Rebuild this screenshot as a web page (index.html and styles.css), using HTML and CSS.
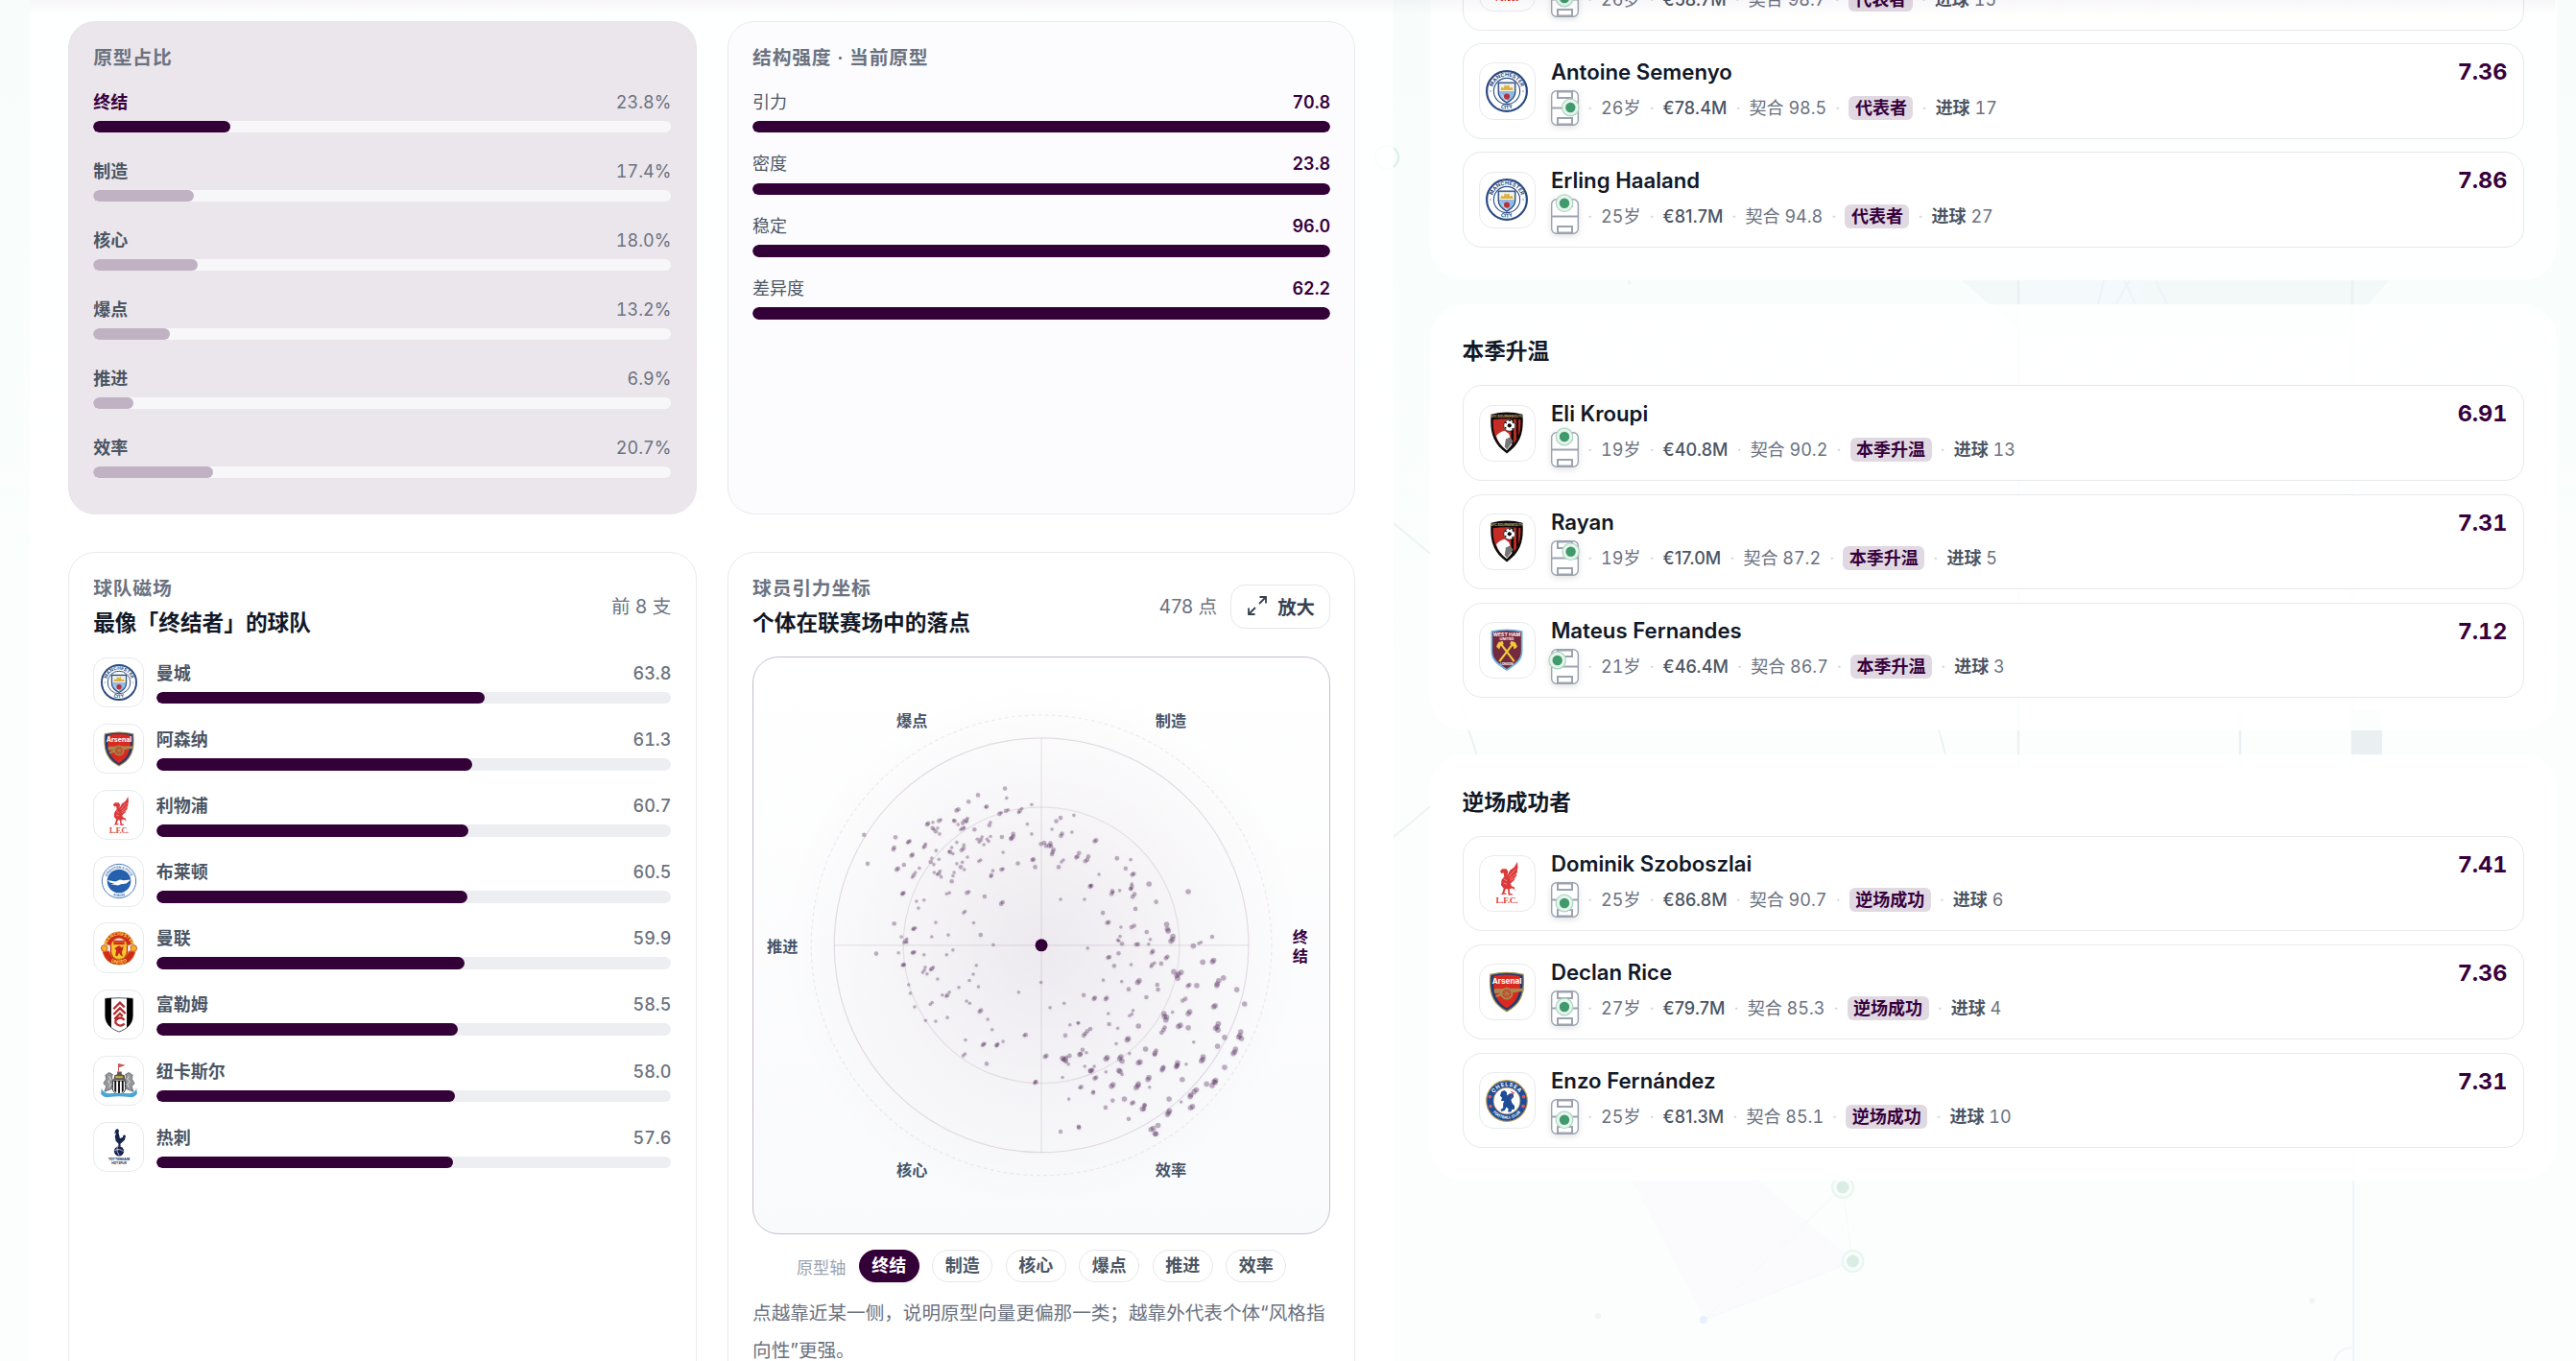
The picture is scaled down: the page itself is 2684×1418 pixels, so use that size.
FILE: index.html
```html
<!DOCTYPE html>
<html lang="zh-CN">
<head>
    <meta charset="UTF-8">
    <meta name="viewport" content="width=device-width, initial-scale=1.0">
    <title>联赛引力场</title>
    <link rel="stylesheet" href="styles.css">
</head>
<body>
    <!-- 队徽 -->
    <svg class="sprite" aria-hidden="true">
        <defs>
            <path id="arcTop" d="M6 20a14 14 0 0 1 28 0"/>
            <path id="arcBottom" d="M3 20a17 17 0 0 0 34 0"/>
            <path id="arcBottomIn" d="M4 21a16 16 0 0 0 32 0"/>
        </defs>
        <symbol id="mci" viewBox="0 0 40 40">
            <circle cx="20" cy="20" r="19" fill="#fff" stroke="#2a4a80" stroke-width="2"/>
            <circle cx="20" cy="20" r="12.4" fill="#fff" stroke="#2a4a80" stroke-width="1"/>
            <text class="ring-text" fill="#2a4a80"><textPath href="#arcTop" startOffset="50%" text-anchor="middle">MANCHESTER</textPath></text>
            <text class="ring-text" fill="#2a4a80"><textPath href="#arcBottom" startOffset="50%" text-anchor="middle">CITY</textPath></text>
            <path d="M12 12h16v9c0 5-4 8-8 10-4-2-8-5-8-10z" fill="#8fbce6" stroke="#2a4a80" stroke-width="1.2"/>
            <path d="M13 13h14v7H13z" fill="#f6f3e4"/>
            <path d="M14 19l1-3 2 1 1-3 2 1 2-1 1 3 2-1 1 3z" fill="#e0b040"/>
            <path d="M13 21l6 8 2 1-8-9zM27 21l-6 8z" fill="#fff"/>
            <circle cx="20" cy="25" r="2.8" fill="#b9303c"/>
            <circle cx="4.5" cy="20" r=".9" fill="#8fbce6"/><circle cx="35.500" cy="20" r=".9" fill="#8fbce6"/>
        </symbol>
        <symbol id="ars" viewBox="0 0 40 40">
            <path d="M4 3.500Q20-.5 36 3.500c1.500 17-1 28-16 36C5 31.500 2.500 20.500 4 3.500z" fill="#a08848"/>
            <path d="M5 4.500Q20 .8 35 4.500c1 16-1 26-15 33.500C6 30.500 4 20.500 5 4.500z" fill="#1b3b78"/>
            <path d="M7.500 5.500Q20 2.500 32.500 5.500c.8 14-1 23.500-12.500 30.500C8.500 29 6.700 19.500 7.500 5.500z" fill="#da2a20"/>
            <text x="20" y="13" text-anchor="middle" class="crest-text" font-size="7.400" fill="#fff">Arsenal</text>
            <path d="M8 17.500l28-.5v2.500l-13 2-13 4-1-1.500 5-2.500H8z" fill="#a8894c"/>
            <circle cx="20" cy="22" r="5" fill="#c33d2a" stroke="#a8894c" stroke-width="1.600"/>
            <path d="M15 22h10M20 17v10M16.500 18.500l7 7M23.500 18.500l-7 7" stroke="#a8894c" stroke-width=".9"/>
        </symbol>
        <symbol id="lfc" viewBox="0 0 40 40">
            <path d="M15.500 30l1.500-5-2.500-3 .5-5 2.500-3-.5-3.500-2 .5-1.500-2 2-2.300 4-.2 1.800 2.500-1 4 2.700-5L27 5l3-5 .5 6-1 2 .8.500-1.500 3.500.8.300-2 3.200-.3 1.500-3.800 3.500 1 2.500 2.500.8 1 3.700-1.500-2-2.200-.5-1.800 1 .5 4h2l.5 1.200-4 .3-.5-5.500-2-.5-1.500 4h1.800l.3 1.200-6 .3z" fill="#dc3a3a"/>
            <path d="M22 14l6-7M23 16l6-5M23.500 17.500l4.500-2.500M17 16l3 2M17 20l3 1" stroke="#f3b0ae" stroke-width=".6" fill="none"/>
            <text x="20" y="39.500" text-anchor="middle" font-size="8.400" textLength="21" fill="#d84040" class="serif-text">L.F.C.</text>
        </symbol>
        <symbol id="bha" viewBox="0 0 40 40">
            <circle cx="20" cy="20" r="18.600" fill="#fff" stroke="#3f74b8" stroke-width="1"/>
            <circle cx="20" cy="20" r="13" fill="#2460ad"/>
            <text class="ring-text thin" fill="#3f74b8"><textPath href="#arcTop" startOffset="50%" text-anchor="middle">BRIGHTON &amp; HOVE</textPath></text>
            <text class="ring-text thin" fill="#3f74b8"><textPath href="#arcBottomIn" startOffset="50%" text-anchor="middle">ALBION</textPath></text>
            <path d="M7 19l9 1.500 5-2 4 .8 8-.8-5 4-6 1-3 1.300-8-1.300 4-.8-5-1.200z" fill="#fff"/>
        </symbol>
        <symbol id="mun" viewBox="0 0 40 40">
            <path d="M11 12h18v12c0 5-4 8-9 10-5-2-9-5-9-10z" fill="#f6c62e" stroke="#c4281c" stroke-width="1.400"/>
            <path d="M4 15Q8 2 20 2t16 13l-7 2q-2-8-9-8t-9 8z" fill="#d3281c" stroke="#b98a22" stroke-width=".8"/>
            <path d="M2 24l7-1q3 9 11 9t11-9l7 1Q34 38 20 38T2 24z" fill="#d3281c" stroke="#b98a22" stroke-width=".8"/>
            <circle cx="4" cy="20" r="3.600" fill="#f0b02a" stroke="#c4281c" stroke-width=".7"/>
            <circle cx="36" cy="20" r="3.600" fill="#f0b02a" stroke="#c4281c" stroke-width=".7"/>
            <text class="ring-text" fill="#f8d84a"><textPath href="#arcTop" startOffset="50%" text-anchor="middle">MANCHESTER</textPath></text>
            <text class="ring-text" fill="#f8d84a"><textPath href="#arcBottomIn" startOffset="50%" text-anchor="middle">UNITED</textPath></text>
            <path d="M14 13h12v3H14z" fill="#d3281c"/>
            <path d="M17 19l3-2 3 2 2-1-1 4-1 2 1 5-2-1-2-3-2 4-2-1 1-6-2-2z" fill="#c4281c"/>
        </symbol>
        <symbol id="ful" viewBox="0 0 40 40">
            <path d="M5 2.500Q20 1 35 2.500v19C35 31 28 36 20 39 12 36 5 31 5 21.500z" fill="#fff" stroke="#222" stroke-width=".8"/>
            <path d="M5 2.500l6.500-.6v32.500Q5 29 5 21.500zM35 2.500l-6.500-.6v32.500Q35 29 35 21.500z" fill="#000"/>
            <path d="M14 14l7-7 5 5M14 20l7-7 6 6M15 25l6-6 3 3M26 26q-4-4-8-1t0 6q4 3 8-1" fill="none" stroke="#b42a2e" stroke-width="2.400"/>
        </symbol>
        <symbol id="new" viewBox="0 0 40 40">
            <path d="M12 29l-8 3 2-6-3-3 3-5-1-4 4-3 4 2-1 4 3 3zM28 29l8 3-2-6 3-3-3-5 1-4-4-3-4 2 1 4-3 3z" fill="#94979b" stroke="#444" stroke-width=".6"/>
            <path d="M9 15l2 3-3 3 3 3-2 3M31 15l-2 3 3 3-3 3 2 3" stroke="#eee" stroke-width=".9" fill="none"/>
            <path d="M13 20h14v8c0 4-3 6-7 8-4-2-7-4-7-8z" fill="#fff" stroke="#222"/>
            <path d="M15 20h2v13l-2-2zM19 20h2v15h-2zM23 20h2v11l-2 2z" fill="#111"/>
            <path d="M14 19l1-5 3-1v-3h5v3l3 1 1 5z" fill="#5c5a50"/>
            <path d="M16 15h8v2h-8z" fill="#d8b040"/>
            <path d="M19 10V1l8 2-7 2.500V10z" fill="#c8524c"/>
            <path d="M1 28q1 6 8 6 11-1 22 0 7 0 8-6l1 6q-3 5-9 4-11-2-22 0-6 1-9-4z" fill="#4aa5d4"/>
        </symbol>
        <symbol id="tot" viewBox="0 0 40 40">
            <path d="M16 1.500l2-1.500 2 1.500-.5 3 1.500 6 3-1 1-3 2.500 1-1.500 5-4.500 4 .3 3h-2.600l.3-3-3-3-1-5 1.500-4-2 1z" fill="#16234f"/>
            <circle cx="20" cy="24.500" r="5.400" fill="#16234f"/>
            <path d="M15 24q5-3 10 1M18 20q-1 5 2 9" stroke="#fff" stroke-width=".7" fill="none"/>
            <text x="20" y="35" text-anchor="middle" font-size="3.600" class="crest-text" fill="#16234f">TOTTENHAM</text>
            <text x="20" y="38.800" text-anchor="middle" font-size="3.400" class="crest-text" fill="#16234f">HOTSPUR</text>
        </symbol>
        <symbol id="bou" viewBox="0 0 40 40">
            <path d="M5 2.500Q20-1.500 35 2.500c1 16-1 27-15 37C6 29.500 4 18.500 5 2.500z" fill="#0d0a0a"/>
            <path d="M7 7.500q13-2 26 0c.4 12-2 20.500-13 28.500C9 28 6.600 19.500 7 7.500z" fill="#c62c26"/>
            <path d="M24 7h2.500v24l-2.500 2.500zM29 7.300h2v16l-2 3z" fill="#0d0a0a"/>
            <path d="M10 23q3-4 8-5l4 3 2 6 1 4-5 5.500Q12 31 10 23z" fill="#fff"/>
            <path d="M19 26l4-2 3 4-6 8-2-3z" fill="#777"/>
            <circle cx="22.500" cy="13" r="5.400" fill="#fff" stroke="#0d0a0a" stroke-width=".6"/>
            <circle cx="22.500" cy="13" r="1.900" fill="#0d0a0a"/>
            <path d="M18 10l2 .5M25.500 9l1 2M18 15l1.500.5M25 17l1-1.500M22 8.500h1.500" stroke="#0d0a0a" stroke-width="1.200"/>
            <text x="20" y="5.600" text-anchor="middle" font-size="3" class="crest-text" fill="#b9a36a">AFC BOURNEMOUTH</text>
        </symbol>
        <symbol id="whu" viewBox="0 0 40 40">
            <path d="M5 2Q20-1 35 2v19c0 10-7 14-15 19-8-5-15-9-15-19z" fill="#6cb4e0"/>
            <path d="M6.500 3.300Q20 .5 33.500 3.300V21c0 9-7 12.500-13.500 17.200C13.500 33.500 6.500 30 6.500 21z" fill="#75293f"/>
            <text x="20" y="7.600" text-anchor="middle" font-size="4.600" class="crest-text" fill="#fff">WEST HAM</text>
            <text x="20" y="11" text-anchor="middle" font-size="3.600" class="crest-text" fill="#fff">UNITED</text>
            <path d="M13 31l13-17M27 31L14 14" stroke="#f1c93c" stroke-width="2" fill="none"/>
            <path d="M10 17l2-4 4-1.500 1 3-3 2-1 3zM30 17l-2-4-4-1.500-1 3 3 2 1 3z" fill="#f1c93c"/>
            <text x="20" y="34.500" text-anchor="middle" font-size="2.800" class="crest-text" fill="#fff">LONDON</text>
        </symbol>
        <symbol id="che" viewBox="0 0 40 40">
            <circle cx="20" cy="20" r="19.400" fill="#1f4c96" stroke="#c3a24d" stroke-width="1"/>
            <circle cx="20" cy="20" r="12.600" fill="#fff" stroke="#c3a24d" stroke-width=".7"/>
            <text class="ring-text wide" fill="#fff"><textPath href="#arcTop" startOffset="50%" text-anchor="middle">CHELSEA</textPath></text>
            <text class="ring-text thin" fill="#fff"><textPath href="#arcBottom" startOffset="50%" text-anchor="middle">FOOTBALL CLUB</textPath></text>
            <path d="M15 11l3-1 2 2 0 3 3-2 3 0 .5 3-2.500 3 1 3 2.500 3-.5 3.500-2-.5-1 2.500h-3l.5-3-2-1.500-1.500 3-3 1-1-1.500 2.500-2 0-4 1-2.500-3 0 1-3-2-2z" fill="#1f4c96"/>
            <path d="M24 11l3 2M23.500 16l2.500 1" stroke="#d6303a" stroke-width="1"/>
            <circle cx="4" cy="16" r="1.700" fill="#e0545c"/><circle cx="36" cy="16" r="1.700" fill="#e0545c"/>
            <circle cx="4.500" cy="25" r="1.700" fill="#e0545c"/><circle cx="35.500" cy="25" r="1.700" fill="#e0545c"/>
        </symbol>
        <symbol id="nfo" viewBox="0 0 40 40">
            <path d="M20 0l9 13H11z M9 13h22l-4 14H13z" fill="#dd2a1f"/>
            <text x="20" y="37" text-anchor="middle" font-size="7" class="crest-text" fill="#dd2a1f">Forest</text>
        </symbol>
    </svg>

    <!-- 背景装饰 -->
    <svg class="backdrop" viewBox="0 0 2684 1418" aria-hidden="true">
        <path d="M2043 291H2490L2440 350H2110z" fill="#f2f9f8"/>
        <path d="M2103 291h130v26h-130z" fill="#f4f9fb"/>
        <path d="M2195 280l-12 50M2210 285l18 38M2220 290l-16 28M2243 285l18 38" stroke="#edf3f8" stroke-width="2"/>
        <path d="M2103 291v509M2334 740v60M2451 291v509" stroke="#ebf1f3" stroke-width="2.500"/>
        <path d="M2452 1200v218" stroke="#f1f5f6" stroke-width="2"/>
        <path d="M2450 740h32v46h-32z" fill="#eaf0f1"/>
        <path d="M1700 1229l76 146 155-61-100-85z" fill="#fbfbfe"/>
        <path d="M1776 1375l144-138M1776 1375l155-61M1920 1237l10 77" stroke="#f6fafc" stroke-width="1.500"/>
        <path d="M1440 535l60 50M1540 790l-20-60M1440 882l60-50M1696 290l2 6M2020 760l8 30" stroke="#ecf3f3" stroke-width="2" fill="none"/>
        <circle cx="1445" cy="164" r="12" fill="none" stroke="#d8efe8" stroke-width="2"/>
        <circle cx="1920" cy="1237" r="11" fill="#f8fdfb" stroke="#e8f6f0" stroke-width="2"/>
        <circle cx="1930.500" cy="1314" r="11" fill="#f8fdfb" stroke="#e8f6f0" stroke-width="2"/>
        <circle cx="1920" cy="1237" r="6.500" fill="#d9ede5"/>
        <circle cx="1930.500" cy="1314" r="6.500" fill="#d9ede5"/>
        <circle cx="1775" cy="1375" r="4" fill="#e8f0fb"/>
        <circle cx="1665" cy="1371" r="3" fill="#eff4f5"/>
        <circle cx="2409" cy="1355" r="3" fill="#eff4f5"/>
        <path d="M2432 1418q4-14 20-14" fill="none" stroke="#f2f5f9" stroke-width="2"/>
    </svg>

    <div class="page">
        <main class="board">
            <section class="card card-tint">
                <h3 class="kicker">原型占比</h3>
                <div class="share-list" id="shares"></div>
            </section>

            <section class="card card-cool">
                <h3 class="kicker">结构强度 · 当前原型</h3>
                <div class="strength-list" id="strengths"></div>
            </section>

            <section class="card card-tall">
                <div class="card-head">
                    <div>
                        <p class="kicker">球队磁场</p>
                        <h2 class="title">最像「终结者」的球队</h2>
                    </div>
                    <span class="count">前 8 支</span>
                </div>
                <div class="team-list" id="teams"></div>
            </section>

            <section class="card card-tall">
                <div class="card-head">
                    <div>
                        <p class="kicker">球员引力坐标</p>
                        <h2 class="title">个体在联赛场中的落点</h2>
                    </div>
                    <div class="head-actions">
                        <span class="count">478 点</span>
                        <button class="zoom-btn" type="button">
                            <svg viewBox="0 0 20 20"><path d="M12.500 1h6.500v6.500M19 1l-7 7M7.500 19H1v-6.500M1 19l7-7" fill="none" stroke="#374151" stroke-width="1.800"/></svg>
                            放大
                        </button>
                    </div>
                </div>
                <svg class="plot" viewBox="-300 -300 600 600">
                    <defs>
                        <radialGradient id="glow">
                            <stop offset="0" stop-color="#37003c" stop-opacity=".075"/>
                            <stop offset=".5" stop-color="#37003c" stop-opacity=".036"/>
                            <stop offset="1" stop-color="#37003c" stop-opacity="0"/>
                        </radialGradient>
                    </defs>
                    <circle r="272" fill="url(#glow)"/>
                    <circle class="orbit orbit-dashed" r="240"/>
                    <circle class="orbit" r="216"/>
                    <circle class="orbit orbit-inner" r="144"/>
                    <path class="orbit orbit-inner" d="M-216 0H216M0-216V216"/>
                    <g id="points" class="points"></g>
                    <circle r="6.500" fill="#340038"/>
                    <g class="axis-labels">
                        <text x="-135" y="-227.500">爆点</text>
                        <text x="135" y="-227.500">制造</text>
                        <text x="-270" y="7">推进</text>
                        <text x="-135" y="240">核心</text>
                        <text x="135" y="240">效率</text>
                        <text class="on" x="270" y="-3">终</text>
                        <text class="on" x="270" y="17.500">结</text>
                    </g>
                </svg>
                <div class="axis-picker">
                    <span class="axis-name">原型轴</span>
                    <button class="pill pill-on" type="button">终结</button>
                    <button class="pill" type="button">制造</button>
                    <button class="pill" type="button">核心</button>
                    <button class="pill" type="button">爆点</button>
                    <button class="pill" type="button">推进</button>
                    <button class="pill" type="button">效率</button>
                </div>
                <p class="note">点越靠近某一侧，说明原型向量更偏那一类；越靠外代表个体“风格指向性”更强。</p>
            </section>
        </main>

        <aside class="side">
            <section class="panel">
                <div class="player-list" data-group="rep"></div>
            </section>
            <section class="panel">
                <h2 class="title">本季升温</h2>
                <div class="player-list" data-group="rise"></div>
            </section>
            <section class="panel">
                <h2 class="title">逆场成功者</h2>
                <div class="player-list" data-group="against"></div>
            </section>
        </aside>
    </div>
    <div class="header-shadow"></div>

    <script src="script.js"></script>
</body>
</html>
```
FILE: styles.css
```css
* {
    box-sizing: border-box;
}

body {
    margin: 0;
    height: 1418px;
    overflow: hidden;
    position: relative;
    background: linear-gradient(180deg, #f8fdfc 0%, #fbfefd 50%, #fbfefd 100%);
    color: #111827;
    font-family: Inter, "Noto Sans CJK SC", sans-serif;
    font-size: 18px;
}

h2, h3, p {
    margin: 0;
}

button {
    font-family: inherit;
}

.sprite {
    display: none;
}

.ring-text {
    font-size: 5px;
    font-weight: 700;
    letter-spacing: 0;
}

.ring-text.thin {
    font-size: 3.6px;
}

.ring-text.wide {
    letter-spacing: 0.8px;
}

.crest-text {
    font-weight: 700;
}

.serif-text {
    font-family: "Liberation Serif", serif;
    font-weight: 700;
}

.backdrop {
    position: absolute;
    inset: 0;
    width: 100%;
    height: 100%;
}

.page {
    position: relative;
    display: flex;
    align-items: flex-start;
    height: 1418px;
    padding-left: 31px;
    overflow: hidden;
}

/* 左侧面板 */
.board {
    width: 1421px;
    height: 1600px;
    flex: none;
    display: grid;
    grid-template-columns: 1fr 1fr;
    grid-template-rows: 514px 1fr;
    gap: 38.8px 32.4px;
    padding: 22px 39.6px 0 40px;
    background: rgba(255, 255, 255, 0.86);
}

.card {
    border: 1px solid #e9eaed;
    border-radius: 28px;
    padding: 24px 25.2px 0;
}

.card-tint {
    background: #ebe6eb;
    border-color: #e8e4e9;
}

.card-cool {
    background: #fcfcfe;
}

.card-tall {
    background: rgba(255, 255, 255, 0.7);
}

.kicker {
    font-size: 19.8px;
    font-weight: 600;
    line-height: 27px;
    letter-spacing: 0.8px;
    color: #6b7280;
}

.title {
    font-size: 22.68px;
    font-weight: 700;
    line-height: 30px;
    color: #111827;
}

.bar-top {
    display: flex;
    justify-content: space-between;
    line-height: 27px;
    color: #4b5563;
}

.bar-value {
    font-variant-numeric: tabular-nums;
    color: #6b7280;
}

.bar {
    height: 12.6px;
    margin-top: 6.3px;
    border-radius: 7px;
    background: #edeef2;
    overflow: hidden;
}

.bar-fill {
    height: 100%;
    border-radius: 7px;
    background: #340038;
}

.share-list {
    display: grid;
    gap: 26.1px;
    margin-top: 18.6px;
}

.share-list .bar-name {
    font-weight: 600;
}

.share-list .bar {
    background: #f7f7f9;
}

.share-list .bar-fill {
    background: #c1b2c3;
}

.share-list .on .bar-name {
    font-weight: 700;
    color: #37003c;
}

.share-list .on .bar-fill {
    background: #340038;
}

.strength-list {
    display: grid;
    gap: 18.9px;
    margin-top: 18.6px;
}

.strength-list .bar-value {
    font-weight: 600;
    color: #37003c;
}

.card-head {
    display: flex;
    align-items: center;
    justify-content: space-between;
}

.card-head .title {
    margin-top: 7.5px;
}

.count {
    font-size: 19.6px;
    line-height: 27px;
    color: #6b7280;
}

.head-actions {
    display: flex;
    align-items: center;
    gap: 14px;
}

.zoom-btn {
    display: flex;
    align-items: center;
    gap: 11px;
    width: 104px;
    height: 46.5px;
    padding: 0 0 2px 17px;
    border: 1px solid #e5e7eb;
    border-radius: 15px;
    background: #fff;
    font-size: 19.4px;
    font-weight: 600;
    color: #374151;
    white-space: nowrap;
}

.zoom-btn svg {
    width: 20px;
    height: 20px;
    flex: none;
}

.crest {
    display: flex;
    align-items: center;
    justify-content: center;
    flex: none;
    border: 1px solid #e9eaee;
    background: #fff;
}

.team-list {
    display: grid;
    gap: 16.95px;
    margin-top: 20.7px;
}

.team {
    display: flex;
    align-items: center;
    gap: 12.6px;
    height: 52.2px;
}

.team .crest {
    width: 53px;
    height: 52.2px;
    border-radius: 14px;
}

.team .crest svg {
    width: 38px;
    height: 38px;
}

.team-bar {
    flex: 1;
    padding-bottom: 0;
}

.team-bar .bar-top {
    line-height: 26px;
}

.team-bar .bar-name {
    font-weight: 600;
}

.team-bar .bar-value {
    font-weight: 500;
}

.team-bar .bar {
    margin-top: 6px;
}

/* 球员坐标图 */
.plot {
    display: block;
    width: 100%;
    height: 601.6px;
    margin-top: 20px;
    border: 1px solid #c9bfce;
    border-radius: 27px;
    background: linear-gradient(180deg, #fff, #f9fafc);
}

.orbit {
    fill: none;
    stroke: #37003c;
    stroke-opacity: 0.12;
    stroke-width: 1.2;
}

.orbit-inner {
    stroke-opacity: 0.09;
}

.orbit-dashed {
    stroke-opacity: 0.07;
    stroke-dasharray: 4 3;
}

.points {
    fill: #502659;
    fill-opacity: 0.34;
    filter: drop-shadow(0 1px 1.5px rgba(55, 0, 60, 0.12));
}

.axis-labels {
    font-size: 16.2px;
    font-weight: 700;
    fill: #475569;
    text-anchor: middle;
}

.axis-labels .on {
    fill: #37003c;
}

.axis-picker {
    display: flex;
    align-items: center;
    justify-content: center;
    gap: 13.5px;
    margin-top: 16.4px;
}

.axis-name {
    font-size: 17.1px;
    color: #9ca3af;
}

.pill {
    height: 34.2px;
    padding: 0 12.5px;
    border: 1px solid #e5e7eb;
    border-radius: 18px;
    background: #fff;
    font-size: 18px;
    font-weight: 600;
    line-height: 30px;
    color: #4b5563;
}

.pill-on {
    border-color: #340038;
    background: #340038;
    color: #fff;
    box-shadow: 0 2px 4px rgba(0, 0, 0, 0.05);
}

.note {
    margin: 12.5px -4px 0 0;
    font-size: 19.6px;
    line-height: 39.2px;
    color: #6b7280;
}

/* 右侧球员列表 */
.side {
    display: flex;
    flex-direction: column;
    gap: 25.2px;
    width: 1174px;
    margin: -122.4px 0 0 37.5px;
    flex: none;
}

.panel {
    padding: 34.7px 33.2px 33.5px 34px;
    border-radius: 36px;
    background: rgba(255, 255, 255, 0.86);
}

.player-list {
    display: grid;
    gap: 13.5px;
    margin-top: 20px;
}

.player {
    display: flex;
    align-items: center;
    height: 99.6px;
    padding: 0 17px 0 16px;
    border: 1px solid #e6e8eb;
    border-radius: 20px;
    background: #fff;
}

.player .crest {
    width: 59.4px;
    height: 59.4px;
    border-radius: 15px;
}

.player .crest svg {
    width: 44px;
    height: 44px;
}

.player-main {
    flex: 1;
    margin-left: 16px;
}

.player-name {
    font-size: 22.2px;
    font-weight: 600;
    line-height: 30.6px;
}

.player-meta {
    display: flex;
    align-items: center;
    gap: 9px;
    height: 36.7px;
    margin-top: 3.7px;
    line-height: 25px;
    font-variant-numeric: tabular-nums;
    color: #6b7280;
}

.player-meta i {
    font-style: normal;
    color: #d1d5db;
}

.price {
    font-weight: 500;
    font-variant-numeric: normal;
    color: #4b5563;
}

.goals b {
    font-weight: 600;
    color: #4b5563;
}

.tag {
    padding: 0 6.5px;
    border-radius: 6px;
    background: #e1d9e2;
    font-weight: 600;
    color: #37003c;
}

.pitch {
    width: 29px;
    height: 37px;
    flex: none;
    overflow: visible;
    filter: drop-shadow(0 2px 3px rgba(0, 0, 0, 0.12));
}

.rating {
    align-self: flex-start;
    margin-top: 14px;
    font-size: 23.4px;
    font-weight: 700;
    line-height: 30.6px;
    font-variant-numeric: tabular-nums;
    color: #37003c;
}

.header-shadow {
    position: absolute;
    top: 0;
    left: 31px;
    width: 2632px;
    height: 16px;
    background: linear-gradient(180deg, rgba(55, 0, 60, 0.035), rgba(55, 0, 60, 0));
}
```
FILE: script.js
```js
var shares = [
    ['终结', 23.8], ['制造', 17.4], ['核心', 18.0],
    ['爆点', 13.2], ['推进', 6.9], ['效率', 20.7]
];

var strengths = [['引力', 70.8], ['密度', 23.8], ['稳定', 96.0], ['差异度', 62.2]];

var teams = [
    ['mci', '曼城', 63.8], ['ars', '阿森纳', 61.3], ['lfc', '利物浦', 60.7], ['bha', '布莱顿', 60.5],
    ['mun', '曼联', 59.9], ['ful', '富勒姆', 58.5], ['new', '纽卡斯尔', 58.0], ['tot', '热刺', 57.6]
];

// 队徽, 姓名, 年龄, 身价, 契合, 标签, 进球, 评分, 场上位置 x/y
var players = {
    rep: [
        ['nfo', 'Morgan Gibbs-White', 26, '58.7', '98.7', '代表者', 15, '7.20', 14, 17],
        ['mci', 'Antoine Semenyo', 26, '78.4', '98.5', '代表者', 17, '7.36', 20.3, 18],
        ['mci', 'Erling Haaland', 25, '81.7', '94.8', '代表者', 27, '7.86', 14, 4.7]
    ],
    rise: [
        ['bou', 'Eli Kroupi', 19, '40.8', '90.2', '本季升温', 13, '6.91', 14, 5],
        ['bou', 'Rayan', 19, '17.0', '87.2', '本季升温', 5, '7.31', 20.6, 11.7],
        ['whu', 'Mateus Fernandes', 21, '46.4', '86.7', '本季升温', 3, '7.12', 6.7, 12]
    ],
    against: [
        ['lfc', 'Dominik Szoboszlai', 25, '86.8', '90.7', '逆场成功', 6, '7.41', 14, 22],
        ['ars', 'Declan Rice', 27, '79.7', '85.3', '逆场成功', 4, '7.36', 14, 17],
        ['che', 'Enzo Fernández', 25, '81.3', '85.1', '逆场成功', 10, '7.31', 14, 21.7]
    ]
};

function crest(id) {
    return '<div class="crest"><svg><use href="#' + id + '"/></svg></div>';
}

function bar(name, value, width) {
    return '<div class="bar-top"><span class="bar-name">' + name + '</span><span class="bar-value">' + value + '</span></div>' +
        '<div class="bar"><div class="bar-fill" style="width:' + width + '%"></div></div>';
}

function pitch(x, y) {
    return '<svg class="pitch" viewBox="0 0 29 37">' +
        '<g fill="none" stroke="#9ca3af" stroke-width="2"><rect x=".7" y=".7" width="27.600" height="35.600" rx="5" fill="#fff" stroke-width="1.400"/>' +
        '<path d="M1 18.500h27"/><rect x="7" y="1.500" width="15" height="6.500"/><rect x="7" y="29" width="15" height="6.500"/></g>' +
        '<circle cx="' + x + '" cy="' + y + '" r="8.800" fill="#eaf3ee" stroke="#a9d8c0" stroke-width="1.200"/>' +
        '<circle cx="' + x + '" cy="' + y + '" r="5.200" fill="#3f9a6c"/></svg>';
}

function player(p) {
    return '<div class="player">' + crest(p[0]) +
        '<div class="player-main"><div class="player-name">' + p[1] + '</div>' +
        '<div class="player-meta">' + pitch(p[8], p[9]) +
        '<i>·</i><span>' + p[2] + '岁</span>' +
        '<i>·</i><span class="price">€' + p[3] + 'M</span>' +
        '<i>·</i><span>契合 ' + p[4] + '</span>' +
        '<i>·</i><span class="tag">' + p[5] + '</span>' +
        '<i>·</i><span class="goals"><b>进球</b> ' + p[6] + '</span></div></div>' +
        '<div class="rating">' + p[7] + '</div></div>';
}

document.getElementById('shares').innerHTML = shares.map(function (s, i) {
    return '<div class="' + (i === 0 ? 'on' : '') + '">' + bar(s[0], s[1].toFixed(1) + '%', s[1]) + '</div>';
}).join('');

document.getElementById('strengths').innerHTML = strengths.map(function (s) {
    return '<div>' + bar(s[0], s[1].toFixed(1), 100) + '</div>';
}).join('');

document.getElementById('teams').innerHTML = teams.map(function (t) {
    return '<div class="team">' + crest(t[0]) + '<div class="team-bar">' + bar(t[1], t[2].toFixed(1), t[2]) + '</div></div>';
}).join('');

document.querySelectorAll('.player-list').forEach(function (el) {
    el.innerHTML = players[el.getAttribute('data-group')].map(player).join('');
});

// 球员落点: 小 / 中 / 大三档, 坐标以 (772, 744) 为圆心
var small = [
    [683,343],[747,361],[687,375],[722,372],[669,383],[736,414],[747,441],[714,382],[674,491],[799,428],[850,436],[855,390],
    [497,428],[512,441],[507,425],[503,486],[492,507],[497,524],[510,510],[498,546],[506,551],[516,558],[513,542],[556,522],
    [570,518],[575,538],[583,504],[556,464],[574,471],[543,478],[546,495],[536,489],[549,546],[546,555],[450,546],[442,559],
    [460,534],[608,455],[620,449],[613,463],[625,470],[642,448],[637,461],[633,455],[642,409],[583,398],[574,404],[566,429],
    [559,415],[575,424],[580,408],[612,515],[617,512],[648,541],[643,557],[674,536],[530,604],[537,601],[587,598],[472,621],
    [453,624],[458,643],[577,652],[573,656],[599,683],[502,682],[450,697],[444,701],[492,721],[534,716],[414,721],[428,727],
    [421,737],[428,736],[649,743],[546,757],[530,770],[472,770],[448,762],[442,765],[407,765],[422,797],[417,799],[475,804],
    [473,812],[469,818],[480,822],[496,804],[489,811],[507,836],[606,799],[598,823],[588,840],[611,857],[561,859],[433,852],
    [437,875],[448,912],[537,872],[529,883],[519,880],[493,900],[488,905],[581,896],[589,902],[476,949],[502,951],[532,941],
    [635,946],[646,974],[578,1002],[577,1040],[572,1045],[627,1012],[621,1017],[661,1013],[657,1018],[674,1006],[714,872],
    [771,845],[794,914],[830,902],[845,961],[865,956],[890,752],[821,619],[882,619],[919,551],[898,581],[823,517],[828,512],
    [972,595],[955,600],[1000,511],[1003,577],[1001,590],[975,695],[973,720],[967,730],[970,732],[1001,797],[977,843],
    [930,839],[943,930],[967,970],[963,1012],[1006,922],[1003,932],[997,936],[883,1074],[907,1074],[937,1089],[826,1104],
    [757,1115],[754,1120],[887,1037],[841,1068],[978,1096],[997,1039],[1107,926],[1161,1008],[1142,1068],[1048,1131],
    [1129,1171],[842,1163],[867,956],[870,1132],[905,1143],[1180,736],[1174,739],[1050,728],[1046,741],[1061,792],[1052,802],
    [728,990],[630,368],[476,468],[471,478],[436,460],[430,465],[515,402],[495,409],[548,404],[416,605],[421,601]
];
var medium = [
    [679,317],[610,335],[586,353],[632,366],[560,374],[555,377],[681,378],[665,386],[717,378],[319,443],[328,522],[399,450],
    [396,478],[394,483],[480,415],[483,412],[510,405],[502,434],[494,425],[550,405],[581,404],[571,411],[571,426],[601,429],
    [639,417],[443,497],[440,500],[421,525],[406,535],[402,538],[433,462],[474,474],[489,517],[539,490],[573,480],[568,485],
    [566,531],[543,570],[510,549],[446,553],[418,603],[582,601],[617,457],[671,449],[700,441],[700,448],[694,454],[696,452],
    [644,553],[670,538],[712,521],[752,510],[749,512],[756,531],[627,611],[673,627],[669,631],[617,716],[396,685],[446,699],
    [425,733],[350,767],[445,764],[420,797],[492,808],[532,880],[618,921],[614,925],[732,988],[632,1067],[624,1014],[658,1016],
    [821,397],[810,406],[825,440],[822,446],[912,458],[908,461],[771,468],[779,465],[784,473],[795,466],[797,474],[803,484],
    [801,490],[799,496],[792,473],[816,531],[868,493],[864,502],[861,505],[892,502],[889,511],[884,515],[965,507],[987,535],
    [1008,549],[1004,552],[900,582],[896,584],[953,596],[951,604],[1003,584],[1000,590],[1010,605],[1005,612],[1012,645],
    [929,656],[944,681],[940,683],[1009,691],[1002,695],[978,740],[1019,741],[1014,742],[969,766],[946,776],[942,778],
    [958,800],[1041,708],[1065,626],[880,880],[909,887],[906,890],[939,887],[936,891],[995,864],[1040,886],[945,959],
    [833,990],[897,972],[889,978],[884,985],[880,990],[785,1045],[781,1048],[844,1045],[836,1050],[828,1055],[835,1061],
    [877,1029],[872,1040],[902,1084],[897,1087],[912,1104],[908,1107],[874,1130],[904,1146],[821,1252],[867,1238],[868,1241],
    [936,1186],[954,1167],[1007,1172],[1003,1175],[1036,1180],[1034,1190],[995,1217],[1068,852],[1070,865],[1057,760],
    [1054,764],[1094,775],[1090,779],[1078,794],[1055,797],[1150,852],[1146,855],[1208,721],[1087,968],[1084,975],[1079,982],
    [1065,1031],[1061,1042],[1084,1076],[1080,1085],[1120,1070],[1116,1076],[1140,890],[1133,895],[1035,1180],[758,1117]
];
var large = [
    [1047,577],[1147,598],[1092,687],[1094,700],[1096,705],[1108,720],[1107,728],[1103,733],[1160,746],[1184,790],[1209,789],
    [1212,785],[1110,816],[1122,822],[1118,827],[1120,834],[1129,818],[1237,833],[1169,854],[1221,849],[1220,854],[1225,841],
    [1271,865],[1291,904],[1216,909],[1212,912],[1151,925],[1147,930],[1085,930],[1086,938],[1092,940],[1090,948],[1127,962],
    [1122,965],[1147,969],[1224,958],[1221,966],[1217,970],[1223,975],[1240,995],[1222,1019],[1281,980],[1279,990],[1276,994],
    [1283,998],[1268,1027],[1266,1035],[1262,1039],[1240,1077],[1185,1048],[1184,1055],[1181,1059],[1120,1064],[1118,1073],
    [1217,1112],[1213,1116],[1216,1118],[1208,1126],[1194,1122],[1132,1110],[1168,1138],[1162,1143],[1154,1152],[1152,1156],
    [1158,1183],[1153,1187],[1098,1163],[1099,1195],[1097,1200],[1094,1205],[1070,1235],[1052,1246],[1058,1243],[1062,1258],
    [1065,1258],[1020,964],[994,998],[991,1002],[1022,841],[1018,845],[1038,1027],[1062,1038],[975,1048],[972,1053],[978,1060],
    [940,1050],[937,1054],[970,1085],[973,1088],[1024,1062],[1020,1064],[1047,1104],[1044,1110],[1020,1122],[1018,1127],
    [1014,1132],[955,1124],[951,1128],[984,1163],[1030,1190],[832,1056],[870,1042],[826,1052],[898,1086],[1082,1080]
];

function dots(list, r) {
    return list.map(function (p) {
        var x = (p[0] - 772) / 2.45;
        var y = (p[1] - 744) / 2.613;
        return '<circle cx="' + x.toFixed(1) + '" cy="' + y.toFixed(1) + '" r="' + r + '"/>';
    }).join('');
}

document.getElementById('points').innerHTML = dots(small, 1.8) + dots(medium, 2.3) + dots(large, 2.8);
```
